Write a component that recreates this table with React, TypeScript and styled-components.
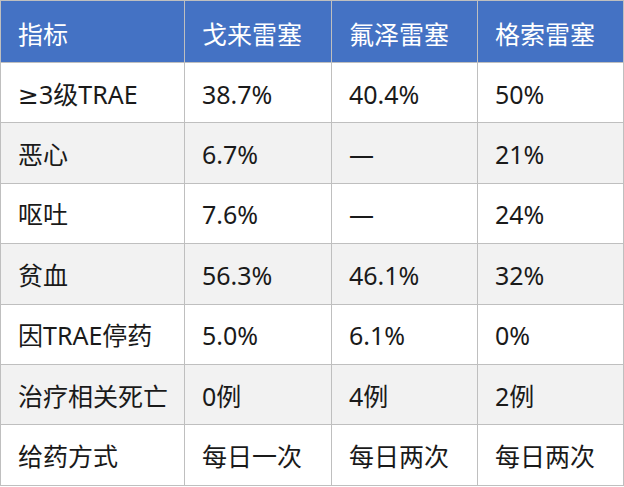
import React from "react";
import styled, { createGlobalStyle } from "styled-components";

const Global = createGlobalStyle`
  html, body { margin: 0; padding: 0; background: #ffffff; }
  body { font-family: "Noto Sans", "DejaVu Sans", "Noto Sans CJK SC", sans-serif; }
`;

const Table = styled.table`
  width: 623px;
  border-collapse: collapse;
  table-layout: fixed;
  font-family: "Noto Sans", "DejaVu Sans", "Noto Sans CJK SC", sans-serif;
  font-size: 25px;
  line-height: 30px;
  color: #1a1a1a;
`;

const Col = styled.col<{ $w: number }>`
  width: ${(p) => p.$w}px;
`;

const HeadRow = styled.tr`
  height: 62px;
  background: #4472c4;
`;

const HeadCell = styled.th`
  padding: 4px 0 0 17px;
  color: #ffffff;
  font-weight: 400;
  text-align: left;
  vertical-align: middle;
  border: 1px solid #bfbfbf;
`;

const Row = styled.tr<{ $shade: boolean }>`
  height: 60.4px;
  background: ${(p) => (p.$shade ? "#f2f2f2" : "#ffffff")};
`;

const Cell = styled.td`
  padding: 2px 0 0 17px;
  text-align: left;
  vertical-align: middle;
  border: 1px solid #bfbfbf;
  white-space: nowrap;
`;

const widths = [184, 147, 146, 146];
const headers = ["指标", "戈来雷塞", "氟泽雷塞", "格索雷塞"];
const rows: string[][] = [
  ["≥3级TRAE", "38.7%", "40.4%", "50%"],
  ["恶心", "6.7%", "—", "21%"],
  ["呕吐", "7.6%", "—", "24%"],
  ["贫血", "56.3%", "46.1%", "32%"],
  ["因TRAE停药", "5.0%", "6.1%", "0%"],
  ["治疗相关死亡", "0例", "4例", "2例"],
  ["给药方式", "每日一次", "每日两次", "每日两次"],
];

export default function App() {
  return (
    <>
      <Global />
      <Table>
        <colgroup>
          {widths.map((w, i) => (
            <Col key={i} $w={w} />
          ))}
        </colgroup>
        <thead>
          <HeadRow>
            {headers.map((h) => (
              <HeadCell key={h}>{h}</HeadCell>
            ))}
          </HeadRow>
        </thead>
        <tbody>
          {rows.map((r, i) => (
            <Row key={r[0]} $shade={i % 2 === 1}>
              {r.map((c, j) => (
                <Cell key={j}>{c}</Cell>
              ))}
            </Row>
          ))}
        </tbody>
      </Table>
    </>
  );
}
